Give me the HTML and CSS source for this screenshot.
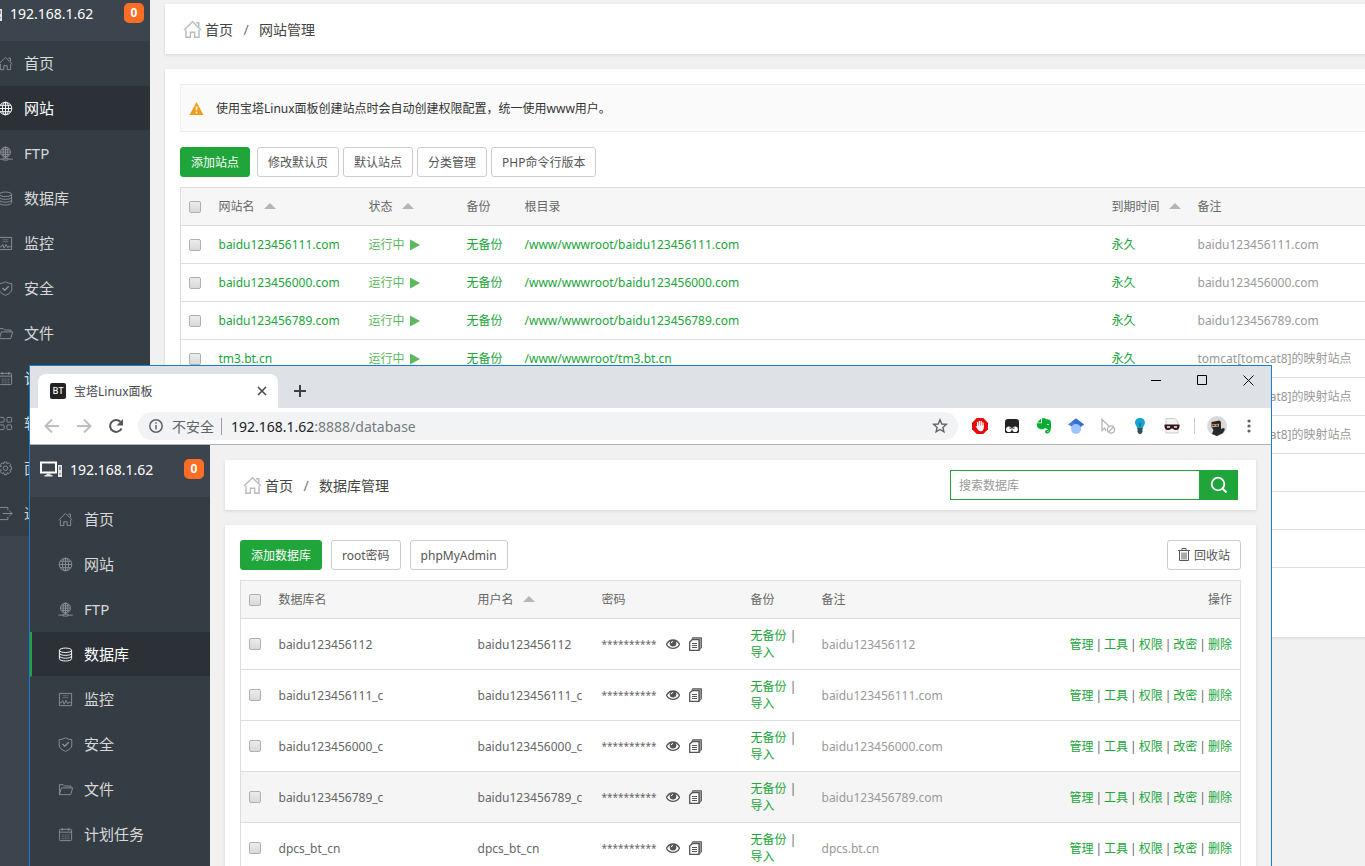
FILE: index.html
```html
<!DOCTYPE html>
<html lang="zh-CN">
<head>
  <meta charset="UTF-8">
  <meta name="viewport" content="width=device-width, initial-scale=1.0">
  <title>宝塔Linux面板</title>
  <link rel="stylesheet" href="styles.css">
</head>
<body>
  <svg class="sprite" aria-hidden="true">
    <symbol id="i-home" viewBox="0 0 16 16"><path d="M.8 8.500 8 1.500l7.200 7M2.500 8.300v6.200h3.700v-4.200h3.600v4.200h3.700V8.300M11 2.300h2.300v3.400"/></symbol>
    <symbol id="i-globe" viewBox="0 0 16 16"><circle cx="8" cy="8" r="6.700"/><ellipse cx="8" cy="8" rx="3.300" ry="6.700"/><path d="M8 1.300v13.400M1.300 8h13.400M2.300 4.600h11.400M2.300 11.400h11.400"/></symbol>
    <symbol id="i-ftp" viewBox="0 0 16 16"><circle cx="8" cy="6.500" r="5.300"/><ellipse cx="8" cy="6.500" rx="2.500" ry="5.300"/><path d="M2.700 6.500h10.600M3.600 4h8.800M3.600 9h8.800M8 1.200v12M.3 14h5.200M10.500 14h5.200M5.500 13h5v2h-5z"/></symbol>
    <symbol id="i-db" viewBox="0 0 16 16"><ellipse cx="8" cy="3.500" rx="6.500" ry="2.400"/><path d="M1.500 3.500v9c0 3.200 13 3.200 13 0v-9M1.500 6.500c0 3.200 13 3.200 13 0M1.500 9.500c0 3.200 13 3.200 13 0"/></symbol>
    <symbol id="i-monitor" viewBox="0 0 16 16"><path d="M1.500 1.500h13v13h-13z"/><path d="M5 4h6M5 6h6" opacity=".6"/><path d="M2 11.500h1.500l1.500-2.500 1.500 4 2-4 2 3.500 1.500-2 1 1h1"/></symbol>
    <symbol id="i-shield" viewBox="0 0 16 16"><path d="M8 .8c2 1.300 4.200 1.800 6.700 1.900v5.800c0 3-3 5.400-6.700 6.800-3.700-1.400-6.700-3.800-6.700-6.800V2.700C3.800 2.600 6 2.100 8 .8z"/><path d="M4.800 7.500l2.400 2.400 4.200-4.400" stroke-width="1.500"/></symbol>
    <symbol id="i-folder" viewBox="0 0 16 16"><path d="M1.500 13.500V2.800h4l1.500 1.500h6.800v2M1.500 13.500 3.600 6.300h12l-2.100 7.200z"/></symbol>
    <symbol id="i-calendar" viewBox="0 0 16 16"><rect x="1.500" y="2.500" width="13" height="12" rx="1"/><path d="M1.500 5.500h13M4.500 1v3M11.500 1v3"/><path d="M4 8.500h2M7 8.500h2M10 8.500h2M4 10.500h2M7 10.500h2M10 10.500h2M4 12.500h2M7 12.500h2M10 12.500h2" opacity=".7"/></symbol>
    <symbol id="i-apps" viewBox="0 0 16 16"><rect x="1.500" y="1.500" width="5" height="5" rx="1"/><rect x="9.500" y="1.500" width="5" height="5" rx="1"/><rect x="1.500" y="9.500" width="5" height="5" rx="1"/><rect x="9.500" y="9.500" width="5" height="5" rx="1"/></symbol>
    <symbol id="i-gear" viewBox="0 0 16 16"><path d="M6.700 1h2.600l.5 2 1.700-1 2 2-1 1.700 2 .6v2.800l-2 .6 1 1.700-2 2-1.700-1-.5 2.100H6.700l-.6-2.100-1.700 1-1.900-2 1-1.700L1.400 9V6.300l2.100-.6-1-1.700 1.900-2 1.700 1z"/><circle cx="8" cy="7.700" r="2.400"/></symbol>
    <symbol id="i-exit" viewBox="0 0 16 16"><path d="M10.500 4.500v-3H1.500v13h9v-3M5 8h10M12 5l3 3-3 3"/></symbol>
    <symbol id="i-server" viewBox="0 0 22 16"><path d="M1 1.500h15v10H1z" fill="none" stroke="#fff" stroke-width="2"/><path d="M6.500 12.500h4V14h2v1.500h-8V14h2z" fill="#e6e6e6"/><path d="M18 4h4v12h-4z" fill="#e6e6e6"/><path d="M19.500 5.500h1v3.500h-1zM19.500 12h1v1.500h-1z" fill="#3c444d"/></symbol>
    <symbol id="i-eye" viewBox="0 0 14 12"><path d="M.5 6.200C2 3.500 4.300 2 7 2s5 1.500 6.500 4.200C12 8.900 9.700 10.300 7 10.300S2 8.900.5 6.200z" fill="#fff" stroke="#555" stroke-width="1.300"/><circle cx="7" cy="5.300" r="3.300" fill="#555"/><path d="M5.300 5.200A1.700 1.700 0 0 1 7 3.500" fill="none" stroke="#fff"/></symbol>
    <symbol id="i-copy" viewBox="0 0 13 14"><path d="M3.500.7h9v10.300l-2.500 2.300V2.700H3z" fill="#999" stroke="#666"/><path d="M3.200 2.700H10v10.600H.7V5z" fill="#fff" stroke="#555" stroke-width="1.300"/><path d="M3 6.500h5M3 8.500h5M3 10.500h5" stroke="#555"/></symbol>
    <symbol id="i-sort" viewBox="0 0 12 6"><path d="M0 6l6-6 6 6z" fill="#b5b5b5"/></symbol>
    <symbol id="i-play" viewBox="0 0 10 12"><path d="M0 .5 10 6 0 11.500z" fill="#5cb85c"/></symbol>
  </svg>

  <div class="desktop">
    <!-- 网站管理 -->
    <section class="panel panel-sites">
      <aside class="sidebar">
        <div class="server">
          <svg class="server-icon"><use href="#i-server"/></svg>
          <span class="server-ip">192.168.1.62</span>
          <span class="badge">0</span>
        </div>
        <nav class="menu">
          <a href="#"><svg><use href="#i-home"/></svg>首页</a>
          <a href="#" class="active"><svg><use href="#i-globe"/></svg>网站</a>
          <a href="#"><svg><use href="#i-ftp"/></svg>FTP</a>
          <a href="#"><svg><use href="#i-db"/></svg>数据库</a>
          <a href="#"><svg><use href="#i-monitor"/></svg>监控</a>
          <a href="#"><svg><use href="#i-shield"/></svg>安全</a>
          <a href="#"><svg><use href="#i-folder"/></svg>文件</a>
          <a href="#"><svg><use href="#i-calendar"/></svg>计划任务</a>
          <a href="#"><svg><use href="#i-apps"/></svg>软件管理</a>
          <a href="#"><svg><use href="#i-gear"/></svg>面板设置</a>
          <a href="#"><svg><use href="#i-exit"/></svg>退出</a>
        </nav>
      </aside>
      <main class="content">
        <div class="card crumbs">
          <svg class="crumb-home"><use href="#i-home"/></svg>
          <a href="#">首页</a><span class="slash">/</span><span>网站管理</span>
        </div>
        <div class="card body-card">
          <div class="alert">
            <svg viewBox="0 0 14 13"><path d="M7 0l7 13H0z" fill="#f39c1a"/><path d="M6 4.500h2l-.3 4H6.300zM6.200 9.700h1.600v1.600H6.200z" fill="#fff"/></svg>
            使用宝塔Linux面板创建站点时会自动创建权限配置，统一使用www用户。
          </div>
          <div class="toolbar toolbar-tight">
            <button class="btn btn-primary">添加站点</button>
            <button class="btn">修改默认页</button>
            <button class="btn">默认站点</button>
            <button class="btn">分类管理</button>
            <button class="btn">PHP命令行版本</button>
          </div>
          <table class="grid sites">
            <colgroup><col class="c-check"><col class="c-site"><col class="c-state"><col class="c-bak"><col><col class="c-due"><col class="c-memo"></colgroup>
            <thead>
              <tr><th><input type="checkbox" aria-label="全选"></th><th>网站名<svg class="sort"><use href="#i-sort"/></svg></th><th>状态<svg class="sort"><use href="#i-sort"/></svg></th><th>备份</th><th>根目录</th><th>到期时间<svg class="sort"><use href="#i-sort"/></svg></th><th>备注</th></tr>
            </thead>
            <tbody>
              <tr><td><input type="checkbox" aria-label="baidu123456111.com"></td><td><a href="#">baidu123456111.com</a></td><td><a href="#" class="run">运行中<svg><use href="#i-play"/></svg></a></td><td><a href="#">无备份</a></td><td><a href="#">/www/wwwroot/baidu123456111.com</a></td><td><a href="#">永久</a></td><td class="memo">baidu123456111.com</td></tr>
              <tr><td><input type="checkbox" aria-label="baidu123456000.com"></td><td><a href="#">baidu123456000.com</a></td><td><a href="#" class="run">运行中<svg><use href="#i-play"/></svg></a></td><td><a href="#">无备份</a></td><td><a href="#">/www/wwwroot/baidu123456000.com</a></td><td><a href="#">永久</a></td><td class="memo">baidu123456000.com</td></tr>
              <tr><td><input type="checkbox" aria-label="baidu123456789.com"></td><td><a href="#">baidu123456789.com</a></td><td><a href="#" class="run">运行中<svg><use href="#i-play"/></svg></a></td><td><a href="#">无备份</a></td><td><a href="#">/www/wwwroot/baidu123456789.com</a></td><td><a href="#">永久</a></td><td class="memo">baidu123456789.com</td></tr>
              <tr><td><input type="checkbox" aria-label="tm3.bt.cn"></td><td><a href="#">tm3.bt.cn</a></td><td><a href="#" class="run">运行中<svg><use href="#i-play"/></svg></a></td><td><a href="#">无备份</a></td><td><a href="#">/www/wwwroot/tm3.bt.cn</a></td><td><a href="#">永久</a></td><td class="memo">tomcat[tomcat8]的映射站点</td></tr>
              <tr><td></td><td></td><td></td><td></td><td></td><td></td><td class="memo">tomcat[tomcat8]的映射站点</td></tr>
              <tr><td></td><td></td><td></td><td></td><td></td><td></td><td class="memo">tomcat[tomcat8]的映射站点</td></tr>
              <tr><td></td><td></td><td></td><td></td><td></td><td></td><td></td></tr>
              <tr><td></td><td></td><td></td><td></td><td></td><td></td><td></td></tr>
              <tr><td></td><td></td><td></td><td></td><td></td><td></td><td></td></tr>
            </tbody>
          </table>
        </div>
      </main>
    </section>

    <!-- 浏览器窗口：数据库管理 -->
    <section class="window">
      <div class="tabstrip">
        <div class="tab">
          <span class="favicon">BT</span>
          <span class="tab-title">宝塔Linux面板</span>
          <button class="icon-btn" aria-label="关闭标签页"><svg width="10" height="10" viewBox="0 0 10 10"><path d="M1 1l8 8M9 1L1 9" stroke="#45494d" stroke-width="1.600"/></svg></button>
        </div>
        <button class="icon-btn new-tab" aria-label="新标签页"><svg width="12" height="12" viewBox="0 0 12 12"><path d="M6 0v12M0 6h12" stroke="#3c4043" stroke-width="2"/></svg></button>
        <div class="win-controls">
          <button aria-label="最小化"><svg width="11" height="11" viewBox="0 0 11 11"><path d="M0 5.500h10"/></svg></button>
          <button aria-label="最大化"><svg width="11" height="11" viewBox="0 0 11 11"><path d="M.5.500h9v9h-9z"/></svg></button>
          <button aria-label="关闭"><svg width="11" height="11" viewBox="0 0 11 11"><path d="M.5.500l10 10M10.500.500l-10 10"/></svg></button>
        </div>
      </div>

      <div class="navbar">
        <button class="icon-btn nav-btn" aria-label="后退"><svg width="16" height="16" viewBox="0 0 16 16" fill="none" stroke="#bcbec1" stroke-width="2"><path d="M15 8H2M8 1.500 1.500 8 8 14.500"/></svg></button>
        <button class="icon-btn nav-btn" aria-label="前进"><svg width="16" height="16" viewBox="0 0 16 16" fill="none" stroke="#bcbec1" stroke-width="2"><path d="M1 8h13M8 1.500 14.500 8 8 14.500"/></svg></button>
        <button class="icon-btn nav-btn" aria-label="刷新"><svg width="16" height="16" viewBox="0 0 16 16"><path d="M13.500 10.500A6 6 0 1 1 12.500 3.800" fill="none" stroke="#54585d" stroke-width="2"/><path d="M15 1v6.500H8.500z" fill="#54585d"/></svg></button>
        <div class="omnibox">
          <svg width="14" height="14" viewBox="0 0 14 14" fill="none" stroke="#5f6368" stroke-width="1.500"><circle cx="7" cy="7" r="6.200"/><path d="M7 6v4.500M7 3.300v1.500"/></svg>
          <span class="insecure">不安全</span>
          <span class="url">192.168.1.62<i>:8888/database</i></span>
          <svg width="16" height="16" viewBox="0 0 16 16" fill="none" stroke="#5f6368" stroke-width="1.400"><path d="M8 1.800l1.800 4.200 4.500.4-3.400 3 1 4.400L8 11.500l-3.900 2.300 1-4.400-3.400-3 4.500-.4z"/></svg>
        </div>
        <div class="extensions">
          <svg viewBox="0 0 16 16"><path d="M4.700 0h6.600L16 4.700v6.600L11.300 16H4.700L0 11.300V4.700z" fill="#e30b0b"/><path d="M5.600 8.500V4.500M7.400 8V3.300M9.200 8V3.300M11 8.500V4.800" stroke="#fff" stroke-width="1.300" stroke-linecap="round"/><path d="M5 7.500h6.700v2.300c0 2-1.200 3.400-3 3.400-1.500 0-2.500-.8-3.200-2.200L3.700 8.600c.6-.7 1.100-.4 1.800.4z" fill="#fff"/></svg>
          <svg viewBox="0 0 16 16"><path d="M4 1h8a3 3 0 0 1 3 3v10l-1 1H2l-1-1V4a3 3 0 0 1 3-3z" fill="#222"/><circle cx="4.900" cy="11.300" r="2.800" fill="#fff"/><circle cx="11.100" cy="11.300" r="2.800" fill="#fff"/><path d="M5.500 9.500h1.300v1.300H5.500zM9.200 9.500h1.300v1.300H9.200z" fill="#222"/></svg>
          <svg viewBox="0 0 16 16"><path d="M5 .8v3.700H1.200zM6 .3c2-.4 3.500 0 4 .9 2 0 4 .5 4.500 1.500.9 3 .8 8-.5 11-.7 1.700-3.500 2.200-4.500 1.300-1-1.500 0-3.700 2.500-3.200v1.500c-1.500 0-1.200 1 0 1 .8-.5.500-2.500-.5-3.300-1-.2-2-.2-2.500-1.200-1 2-3.500 1.700-5.500 1C1.500 10.500.8 8 .7 5.300H6z" fill="#05ab32"/><path d="M11 6.500c1-.8 2-.3 2 .8-.7-.3-1.300-.3-2-.1z" fill="#fff"/></svg>
          <svg viewBox="0 0 16 16"><path d="M8 .5 16 6.500 8 11 0 6.500z" fill="#3f7eee"/><path d="M8 .5 16 6.500l-4 3L4 3.500z" fill="#376fd0"/><circle cx="8" cy="11" r="5" fill="#9ec3ff"/></svg>
          <svg viewBox="0 0 16 16" fill="none" stroke="#b4b4b4" stroke-width="1.300"><path d="M6 13 4.500 10 2 12.500V1.500l7.500 7"/><circle cx="11" cy="11.500" r="3.600"/><path d="M8.500 14 13.500 9"/></svg>
          <svg viewBox="0 0 16 16"><path d="M8 0c3.200 0 5 2.200 5 4.700 0 2.500-2.300 3.300-2.500 6.300h-5C5.300 8 3 7.200 3 4.700 3 2.200 4.800 0 8 0z" fill="#12a5d0"/><path d="M5.500 10h5v4L9 16H7l-1.500-2z" fill="#31505c"/><path d="M6.500 4.500 8 6l1.500-1.500L8 10z" fill="#14647e"/></svg>
          <svg viewBox="0 0 16 16"><path d="M2 .5h9L14 4v11H2z" fill="#f5f5f5" stroke="#ccc"/><path d="M.5 6.500h15c.3 4-1 5.500-4 5.500-1.700 0-2.500-1.500-3.500-1.500S6.200 12 4.500 12c-3 0-4.300-1.500-4-5.500z" fill="#37191c"/><path d="M3 9h3M10 9h3" stroke="#eee" stroke-width="1.500"/></svg>
        </div>
        <svg class="avatar" width="20" height="20" viewBox="0 0 20 20"><circle cx="10" cy="10" r="10" fill="#d9d9d9"/><path d="M4.500 6 12.500 4.500 14 6v7l2.500-1 1.500 1-2 4-6 3-5-2 1.500-4L4.500 11z" fill="#25292c"/><path d="M4.500 8.500 12 7.800v2.700l-7 .7z" fill="#d9a16f"/><path d="M5.500 9.500h2M9 9.200h2" stroke="#222"/></svg>
        <button class="icon-btn more" aria-label="菜单"><svg width="4" height="14" viewBox="0 0 4 14" fill="#5f6368"><circle cx="2" cy="2" r="1.600"/><circle cx="2" cy="7" r="1.600"/><circle cx="2" cy="12" r="1.600"/></svg></button>
      </div>

      <div class="panel">
        <aside class="sidebar">
          <div class="server">
            <svg class="server-icon"><use href="#i-server"/></svg>
            <span class="server-ip">192.168.1.62</span>
            <span class="badge">0</span>
          </div>
          <nav class="menu">
            <a href="#"><svg><use href="#i-home"/></svg>首页</a>
            <a href="#"><svg><use href="#i-globe"/></svg>网站</a>
            <a href="#"><svg><use href="#i-ftp"/></svg>FTP</a>
            <a href="#" class="active"><svg><use href="#i-db"/></svg>数据库</a>
            <a href="#"><svg><use href="#i-monitor"/></svg>监控</a>
            <a href="#"><svg><use href="#i-shield"/></svg>安全</a>
            <a href="#"><svg><use href="#i-folder"/></svg>文件</a>
            <a href="#"><svg><use href="#i-calendar"/></svg>计划任务</a>
            <a href="#" aria-label="软件管理"></a>
          </nav>
        </aside>
        <main class="content">
          <div class="card crumbs">
            <svg class="crumb-home"><use href="#i-home"/></svg>
            <a href="#">首页</a><span class="slash">/</span><span>数据库管理</span>
            <form class="search">
              <input type="text" placeholder="搜索数据库" aria-label="搜索数据库">
              <button type="button" aria-label="搜索"><svg width="18" height="18" viewBox="0 0 18 18" fill="none" stroke="#fff" stroke-width="1.800"><circle cx="8" cy="8" r="6.300"/><path d="M12.500 12.500 16.500 16.500"/></svg></button>
            </form>
          </div>
          <div class="card body-card">
            <div class="toolbar">
              <button class="btn btn-primary">添加数据库</button>
              <button class="btn">root密码</button>
              <button class="btn">phpMyAdmin</button>
              <button class="btn btn-recycle"><svg width="12" height="14" viewBox="0 0 12 14" fill="none" stroke="#555"><path d="M0 2.500h12M4 2V.5h4V2M1.500 3v9.500h9V3M4 4.500v7M6 4.500v7M8 4.500v7"/></svg>回收站</button>
            </div>
            <table class="grid databases">
              <colgroup><col class="c-check"><col class="c-db"><col class="c-user"><col class="c-pwd"><col class="c-dbbak"><col><col class="c-ops"></colgroup>
              <thead>
                <tr><th><input type="checkbox" aria-label="全选"></th><th>数据库名</th><th>用户名<svg class="sort"><use href="#i-sort"/></svg></th><th>密码</th><th>备份</th><th>备注</th><th class="ops">操作</th></tr>
              </thead>
              <tbody>
                <tr><td><input type="checkbox" aria-label="baidu123456112"></td><td>baidu123456112</td><td>baidu123456112</td><td><div class="pwd"><span>**********</span><svg class="eye"><use href="#i-eye"/></svg><svg class="copy"><use href="#i-copy"/></svg></div></td><td><a href="#">无备份</a> | <a href="#">导入</a></td><td class="memo">baidu123456112</td><td><div class="links"><a href="#">管理</a>|<a href="#">工具</a>|<a href="#">权限</a>|<a href="#">改密</a>|<a href="#">删除</a></div></td></tr>
                <tr><td><input type="checkbox" aria-label="baidu123456111_c"></td><td>baidu123456111_c</td><td>baidu123456111_c</td><td><div class="pwd"><span>**********</span><svg class="eye"><use href="#i-eye"/></svg><svg class="copy"><use href="#i-copy"/></svg></div></td><td><a href="#">无备份</a> | <a href="#">导入</a></td><td class="memo">baidu123456111.com</td><td><div class="links"><a href="#">管理</a>|<a href="#">工具</a>|<a href="#">权限</a>|<a href="#">改密</a>|<a href="#">删除</a></div></td></tr>
                <tr><td><input type="checkbox" aria-label="baidu123456000_c"></td><td>baidu123456000_c</td><td>baidu123456000_c</td><td><div class="pwd"><span>**********</span><svg class="eye"><use href="#i-eye"/></svg><svg class="copy"><use href="#i-copy"/></svg></div></td><td><a href="#">无备份</a> | <a href="#">导入</a></td><td class="memo">baidu123456000.com</td><td><div class="links"><a href="#">管理</a>|<a href="#">工具</a>|<a href="#">权限</a>|<a href="#">改密</a>|<a href="#">删除</a></div></td></tr>
                <tr class="hover"><td><input type="checkbox" aria-label="baidu123456789_c"></td><td>baidu123456789_c</td><td>baidu123456789_c</td><td><div class="pwd"><span>**********</span><svg class="eye"><use href="#i-eye"/></svg><svg class="copy"><use href="#i-copy"/></svg></div></td><td><a href="#">无备份</a> | <a href="#">导入</a></td><td class="memo">baidu123456789.com</td><td><div class="links"><a href="#">管理</a>|<a href="#">工具</a>|<a href="#">权限</a>|<a href="#">改密</a>|<a href="#">删除</a></div></td></tr>
                <tr><td><input type="checkbox" aria-label="dpcs_bt_cn"></td><td>dpcs_bt_cn</td><td>dpcs_bt_cn</td><td><div class="pwd"><span>**********</span><svg class="eye"><use href="#i-eye"/></svg><svg class="copy"><use href="#i-copy"/></svg></div></td><td><a href="#">无备份</a> | <a href="#">导入</a></td><td class="memo">dpcs.bt.cn</td><td><div class="links"><a href="#">管理</a>|<a href="#">工具</a>|<a href="#">权限</a>|<a href="#">改密</a>|<a href="#">删除</a></div></td></tr>
              </tbody>
            </table>
          </div>
        </main>
      </div>
    </section>
  </div>
</body>
</html>
```
FILE: styles.css
```css
* {
  box-sizing: border-box;
}

body {
  margin: 0;
  font-family: "Noto Sans", "Noto Sans CJK SC", sans-serif;
  font-size: 12px;
  line-height: 17px;
  color: #666;
  background: #f1f1f1;
}

a {
  color: #20a53a;
  text-decoration: none;
}

button,
input {
  font-family: inherit;
  font-size: 12px;
}

svg {
  flex: none;
}

.sprite {
  display: none;
}

.desktop {
  position: relative;
  height: 100vh;
  overflow: hidden;
}

/* 面板 */
.panel {
  display: flex;
  background: #f1f1f1;
}

.panel-sites {
  position: absolute;
  top: -11px;
  right: -60px;
  bottom: 0;
  left: -30px;
}

.sidebar {
  flex: none;
  width: 180px;
  background: #3c444d;
}

.server {
  display: flex;
  align-items: center;
  height: 52px;
  padding: 0 6px 4px 10px;
  color: #fff;
  font-size: 14px;
}

.server-icon {
  width: 22px;
  height: 16px;
  margin-right: 8px;
}

.badge {
  width: 20px;
  margin-left: auto;
  border-radius: 5px;
  background: #fc6d26;
  font-size: 12px;
  font-weight: bold;
  line-height: 20px;
  text-align: center;
}

.menu a {
  display: flex;
  align-items: center;
  height: 45px;
  padding-left: 26px;
  border-left: 2px solid transparent;
  border-bottom: 1px solid #343b42;
  background: #353d44;
  color: #d8d8d8;
  font-size: 15px;
}

.menu svg {
  width: 15px;
  height: 15px;
  margin-right: 11px;
  fill: none;
  stroke: #8b9095;
}

.menu .active {
  border-left-color: #20a53a;
  background: #2c3138;
  color: #fff;
}

.menu .active svg {
  stroke: #fff;
}

.content {
  flex: 1;
  min-width: 0;
  padding: 15px;
}

.card {
  background: #fff;
  box-shadow: 0 1px 3px rgba(0, 0, 0, 0.12);
}

.crumbs {
  display: flex;
  align-items: center;
  height: 50px;
  margin-bottom: 15px;
  padding: 0 18px;
  color: #444;
  font-size: 14px;
}

.crumbs a {
  color: #444;
}

.crumb-home {
  width: 19px;
  height: 19px;
  margin-right: 3px;
  fill: none;
  stroke: #bbb;
  stroke-width: 1.2;
}

.slash {
  width: 26px;
  color: #777;
  text-align: center;
}

.search {
  display: flex;
  margin-left: auto;
}

.search input {
  width: 249px;
  height: 30px;
  padding: 0 8px;
  border: 1px solid #20a53a;
  border-right: 0;
  outline: none;
}

.search input::placeholder {
  color: #999;
}

.search button {
  display: flex;
  align-items: center;
  justify-content: center;
  width: 39px;
  padding: 0;
  border: 0;
  background: #20a53a;
}

.body-card {
  padding: 15px;
}

.panel-sites .body-card {
  height: 568px;
}

.alert {
  display: flex;
  align-items: center;
  gap: 12px;
  height: 48px;
  margin-bottom: 15px;
  padding: 0 8px;
  border: 1px solid #eee;
  background: #fafafa;
  color: #333;
}

.alert svg {
  width: 15px;
  height: 13px;
}

.toolbar {
  display: flex;
  gap: 9px;
  margin-bottom: 10px;
}

.toolbar-tight {
  gap: 4px;
}

.toolbar-tight .btn-primary {
  margin-right: 3px;
}

.btn {
  height: 30px;
  padding: 0 10px;
  border: 1px solid #ccc;
  border-radius: 3px;
  background: #fff;
  color: #555;
  cursor: pointer;
}

.btn-primary {
  border-color: #20a53a;
  background: #20a53a;
  color: #fff;
}

.btn-recycle {
  display: flex;
  align-items: center;
  gap: 4px;
  margin-left: auto;
}

/* 表格 */
.grid {
  width: 100%;
  table-layout: fixed;
  border-collapse: collapse;
  border: 1px solid #ddd;
}

.grid th,
.grid td {
  height: 38px;
  padding: 0 8px;
  border-bottom: 1px solid #ddd;
  font-weight: normal;
  text-align: left;
  vertical-align: middle;
}

.grid th {
  background: #f6f6f6;
}

.databases td {
  height: 51px;
}

.grid .hover {
  background: #f5f5f5;
}

.grid .memo {
  color: #999;
}

.grid .ops {
  text-align: right;
}

.links {
  display: flex;
  justify-content: flex-end;
  gap: 2px;
  white-space: nowrap;
}

.grid input {
  display: block;
  width: 12px;
  height: 12px;
  margin: 0;
  border: 1px solid #b0b0b0;
  border-radius: 2px;
  background: linear-gradient(#ececec, #d9d9d9);
  appearance: none;
}

.c-check { width: 30px; }
.c-site { width: 150px; }
.c-state { width: 98px; }
.c-bak { width: 58px; }
.c-due { width: 86px; }
.c-memo { width: 205px; }
.c-db { width: 199px; }
.c-user { width: 124px; }
.c-pwd { width: 149px; }
.c-dbbak { width: 71px; }
.c-ops { width: 200px; }

.sort {
  width: 12px;
  height: 6px;
  margin-left: 9px;
  vertical-align: 2px;
}

.run {
  display: flex;
  align-items: center;
  gap: 5px;
  color: #5cb85c;
}

.run svg {
  width: 10px;
  height: 12px;
}

.pwd {
  display: flex;
  align-items: center;
  gap: 9px;
  font-size: 10px;
}

.eye {
  width: 14px;
  height: 12px;
}

.copy {
  width: 13px;
  height: 14px;
}

/* 浏览器窗口 */
.window {
  position: absolute;
  top: 365px;
  right: 93px;
  bottom: -20px;
  left: 29px;
  display: flex;
  flex-direction: column;
  overflow: hidden;
  border: 1px solid #1a7ccd;
  background: #fff;
}

.window .panel {
  flex: 1;
  min-height: 0;
}

.tabstrip {
  display: flex;
  flex: none;
  height: 42px;
  padding-left: 8px;
  background: #dee1e6;
}

.tab {
  display: flex;
  align-items: center;
  width: 240px;
  margin-top: 8px;
  padding: 0 11px 0 12px;
  border-radius: 8px 8px 0 0;
  background: #fff;
  color: #45494d;
}

.favicon {
  width: 16px;
  margin-right: 8px;
  border-radius: 2px;
  background: #222;
  color: #fff;
  font-size: 9px;
  font-weight: 500;
  line-height: 16px;
  text-align: center;
}

.icon-btn {
  display: flex;
  align-items: center;
  justify-content: center;
  padding: 0;
  border: 0;
  background: none;
}

.tab .icon-btn {
  margin-left: auto;
}

.new-tab {
  width: 44px;
  padding-top: 8px;
}

.win-controls {
  display: flex;
  height: 29px;
  margin-left: auto;
}

.win-controls button {
  display: flex;
  align-items: center;
  justify-content: center;
  width: 46px;
  padding: 0;
  border: 0;
  background: none;
}

.win-controls svg {
  fill: none;
  stroke: #000;
}

.navbar {
  display: flex;
  flex: none;
  align-items: center;
  height: 37px;
  padding-left: 6px;
  border-bottom: 1px solid #b3b3b3;
}

.nav-btn {
  width: 32px;
}

.omnibox {
  display: flex;
  flex: 1;
  align-items: center;
  height: 28px;
  margin-left: 6px;
  padding: 0 10px 0 11px;
  border-radius: 14px;
  background: #f1f3f4;
  font-size: 14px;
}

.insecure {
  margin-left: 9px;
  padding-right: 7px;
  border-right: 1px solid #9aa0a6;
  color: #5f6368;
}

.url {
  flex: 1;
  margin-left: 9px;
  color: #202124;
}

.url i {
  color: #777b80;
  font-style: normal;
}

.extensions {
  display: flex;
  gap: 16px;
  margin-left: 14px;
  padding-right: 14px;
  border-right: 1px solid #ccc;
}

.extensions svg {
  width: 16px;
  height: 16px;
}

.avatar {
  margin-left: 12px;
}

.more {
  width: 44px;
}
```
